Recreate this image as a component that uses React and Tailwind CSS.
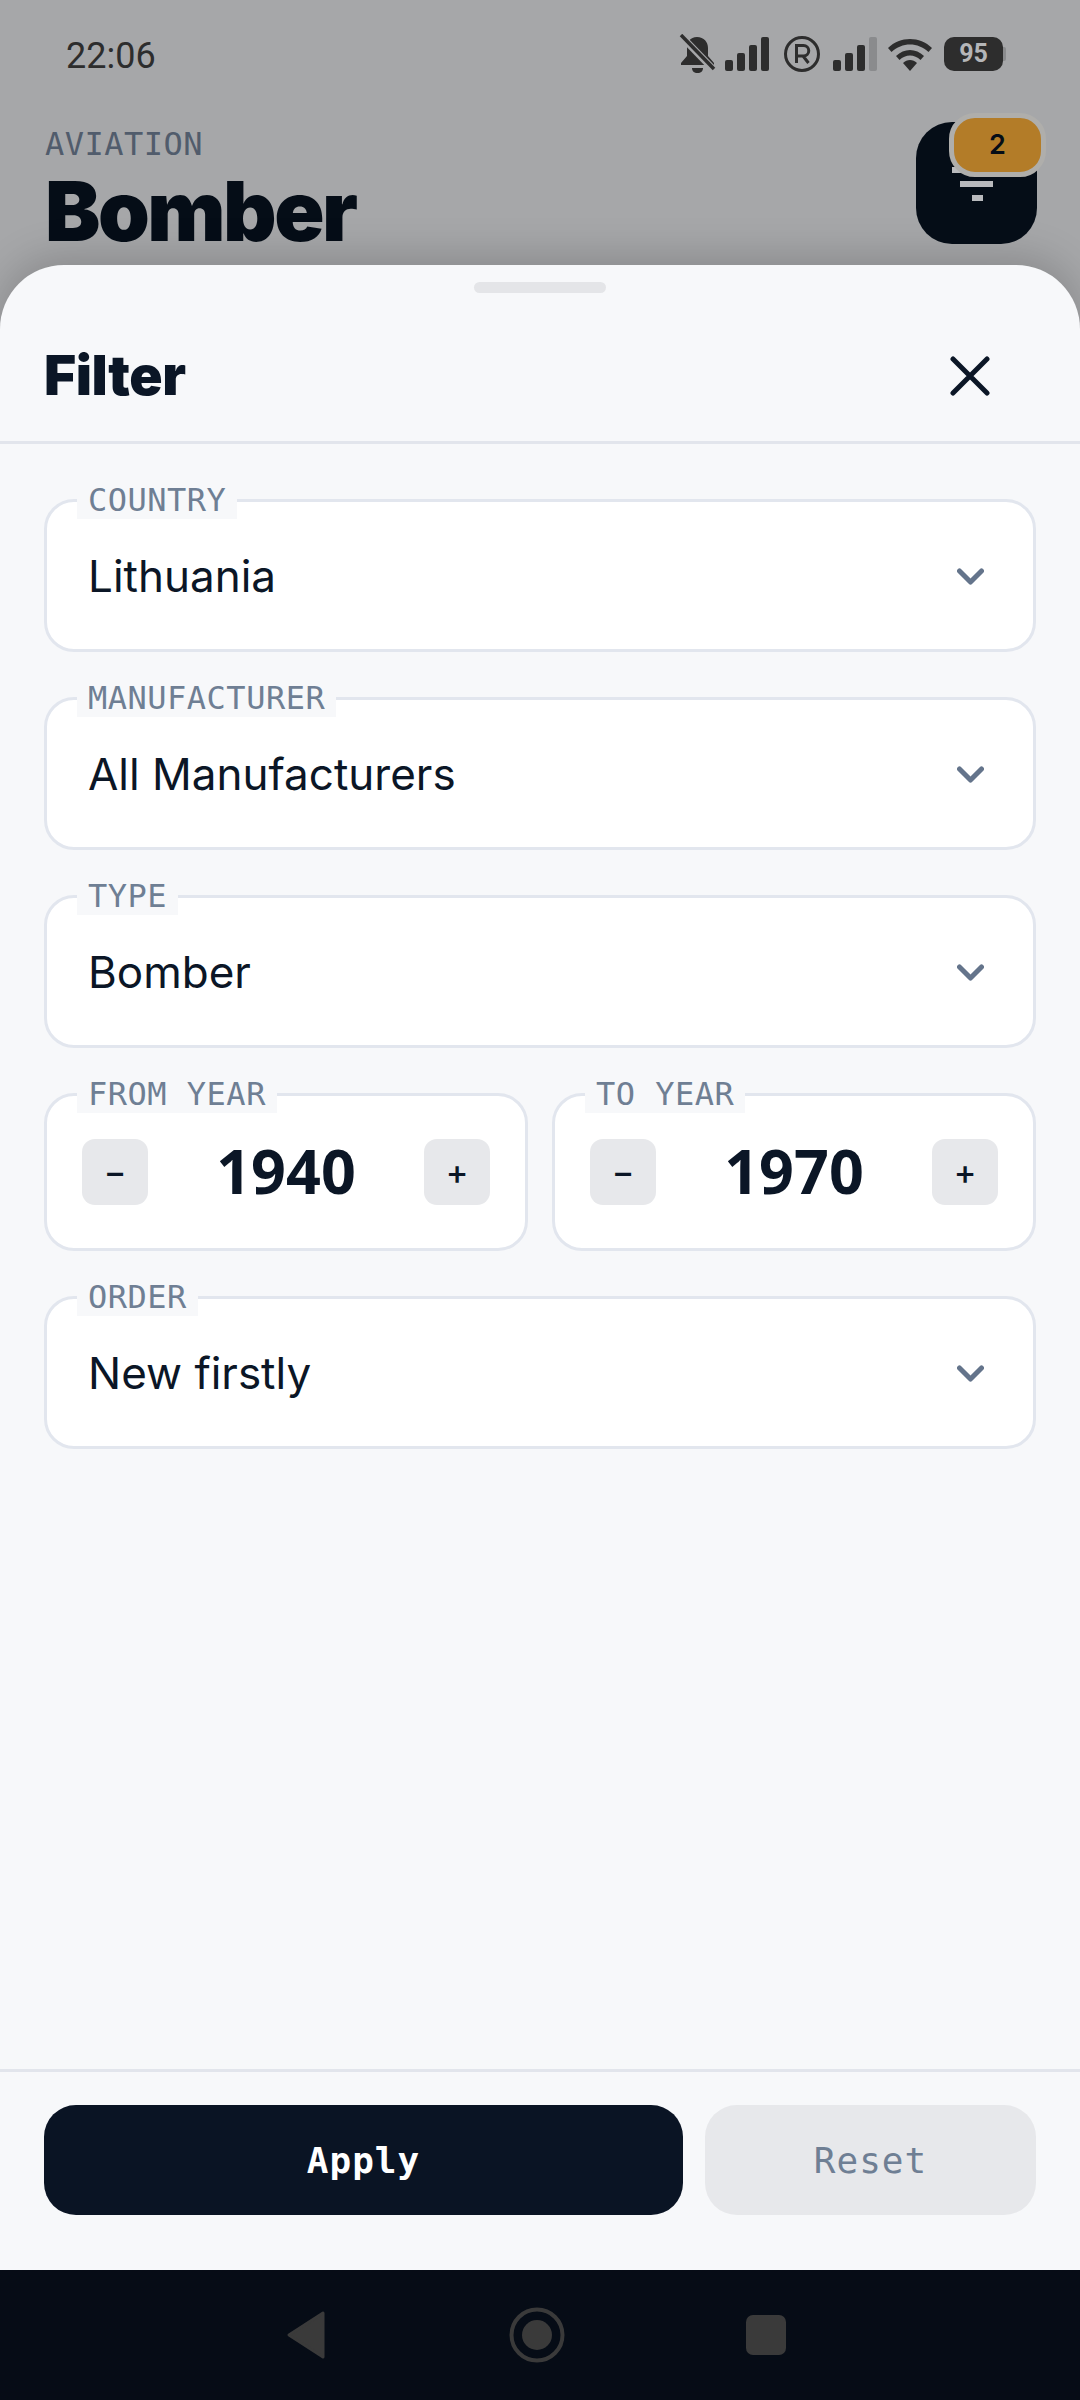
import React from "react";

const mono = "font-['DejaVu_Sans_Mono',monospace]";

function Signal({ last = "#2d2d2d" }) {
  return (
    <svg width="44" height="34" viewBox="0 0 44 34">
      <rect x="0" y="23" width="8" height="11" rx="2" fill="#2d2d2d" />
      <rect x="12" y="16" width="8" height="18" rx="2" fill="#2d2d2d" />
      <rect x="24" y="8" width="8" height="26" rx="2" fill="#2d2d2d" />
      <rect x="36" y="0" width="8" height="34" rx="2" fill={last} />
    </svg>
  );
}

function StatusBar() {
  return (
    <div className="flex h-[112px] items-start justify-between pl-[66px] pr-[74px] pt-[34px]">
      <span className="font-['Roboto',sans-serif] text-[36px] leading-[44px] text-[#2d2d2d]">22:06</span>
      <div className="flex items-center">
        <svg width="38" height="40" viewBox="0 0 38 40" className="mr-[8px]">
          <path d="M18 3c-7 0-10 5-10 11v8l-6 7v2h33v-2l-6-7v-8c0-6-4-11-11-11z" fill="#2d2d2d" />
          <path d="M13 34h11c0 3-2 5-5.500 5S13 37 13 34z" fill="#2d2d2d" />
          <path d="M3 3l32 33" stroke="#a6a7a9" strokeWidth="7" />
          <path d="M2 1l33 34" stroke="#2d2d2d" strokeWidth="3.500" />
        </svg>
        <Signal />
        <svg width="38" height="38" viewBox="0 0 38 38" className="ml-[14px] mr-[12px]">
          <circle cx="19" cy="19" r="16.500" fill="none" stroke="#2d2d2d" strokeWidth="3" />
          <path d="M13.500 28V10.500h7a5 5 0 0 1 0 10.500h-7M20 21l5.500 7" fill="none" stroke="#2d2d2d" strokeWidth="3" />
        </svg>
        <Signal last="#8a8b8d" />
        <svg width="46" height="34" viewBox="0 0 46 34" className="ml-[10px] mr-[11px]">
          <path d="M1 11C13-1 33-1 45 11l-3.500 4C31 5 15 5 4.500 15z" fill="#2d2d2d" />
          <path d="M9 19c8-8 20-8 28 0l-3.500 4c-6-6-15-6-21 0z" fill="#2d2d2d" />
          <path d="M16 26c4-4 10-4 14 0l-7 8z" fill="#2d2d2d" />
        </svg>
        <div className="flex items-center">
          <div className="flex h-[34px] w-[59px] items-center justify-center rounded-[10px] bg-[#2d2d2d] font-['Roboto',sans-serif] text-[25px] font-bold text-[#b5b6b8]">
            95
          </div>
          <div className="h-[14px] w-[3px] rounded-r-[2px] bg-[#8a8b8d]" />
        </div>
      </div>
    </div>
  );
}

function Header() {
  return (
    <div className="flex h-[153px] items-start justify-between pl-[45px] pr-[43px]">
      <div className="flex flex-col pt-[16px]">
        <span className={`${mono} text-[32px] leading-[32px] tracking-[0.5px] text-[#515c6c]`}>AVIATION</span>
        <span className="font-['Inter',sans-serif] mt-[6px] text-[83px] font-black leading-[90px] tracking-[-2.500px] text-[#050d17]">
          Bomber
        </span>
      </div>
      <div className="relative mt-[10px] h-[122px] w-[121px] rounded-[36px] bg-[#050d17]">
        <div className="absolute left-[36px] top-[45px] h-[6px] w-[50px] bg-[#b9babd]" />
        <div className="absolute left-[44px] top-[59px] h-[6px] w-[33px] bg-[#b9babd]" />
        <div className="absolute left-[56px] top-[73px] h-[6px] w-[11px] bg-[#b9babd]" />
        <div className="absolute left-[33px] top-[-9px] flex h-[64px] w-[97px] items-center justify-center rounded-[26px] border-[5px] border-[#afaeab] bg-[#b37c28] font-['Inter',sans-serif] text-[27px] font-semibold text-[#050d17]">
          2
        </div>
      </div>
    </div>
  );
}

function Chevron() {
  return (
    <svg width="27" height="18" viewBox="0 0 27 18" fill="none" className="mt-[3px]">
      <path d="M2.500 3l11 11 11-11" stroke="#64748b" strokeWidth="5" strokeLinecap="round" strokeLinejoin="round" />
    </svg>
  );
}

function Label({ children }) {
  return (
    <span className={`${mono} absolute left-[30px] top-[-21px] bg-[#f7f8fa] px-[11px] text-[32px] leading-[38px] tracking-[0.5px] text-[#6f7f94]`}>
      {children}
    </span>
  );
}

function SelectField({ label, value }) {
  return (
    <div className="relative flex h-[153px] items-center justify-between rounded-[30px] border-[3px] border-[#e2e6ee] bg-white pl-[41px] pr-[49px]">
      <Label>{label}</Label>
      <span className="font-['Inter',sans-serif] text-[44px] leading-[52px] text-[#0b1626]">{value}</span>
      <Chevron />
    </div>
  );
}

function StepButton({ children }) {
  return (
    <div className="flex h-[66px] w-[66px] items-center justify-center rounded-[13px] bg-[#e7e8eb] font-['Inter',sans-serif] text-[34px] font-medium leading-none text-[#0b1626]">
      {children}
    </div>
  );
}

function YearField({ label, value }) {
  return (
    <div className="relative flex h-[158px] flex-1 items-center justify-between rounded-[30px] border-[3px] border-[#e2e6ee] bg-white px-[35px]">
      <Label>{label}</Label>
      <StepButton>−</StepButton>
      <span className="mb-[4px] font-['Noto_Sans',sans-serif] text-[61px] font-bold leading-none text-[#0b1626]">{value}</span>
      <StepButton>+</StepButton>
    </div>
  );
}

export default function App() {
  return (
    <div className="flex h-[2400px] w-[1080px] flex-col overflow-hidden bg-[#a6a7a9]">
      <StatusBar />
      <Header />
      <div className="flex flex-1 flex-col rounded-t-[64px] bg-[#f7f8fa] shadow-[0_-8px_40px_rgba(0,0,0,0.18)]">
        <div className="flex h-[179px] flex-col border-b-[3px] border-[#e2e5ec]">
          <div className="mx-auto mt-[17px] h-[11px] w-[132px] rounded-full bg-[#e4e5e8]" />
          <div className="flex flex-1 items-center justify-between pl-[44px] pr-[90px] pt-[17px]">
            <span className="font-['Inter',sans-serif] text-[55px] font-black leading-none tracking-[-0.400px] text-[#0b1626]">Filter</span>
            <svg width="40" height="40" viewBox="0 0 40 40" fill="none">
              <path d="M3 3l34 34M37 3L3 37" stroke="#0b1626" strokeWidth="5" strokeLinecap="round" />
            </svg>
          </div>
        </div>
        <div className="flex flex-1 flex-col gap-[45px] px-[44px] pt-[55px]">
          <SelectField label="COUNTRY" value="Lithuania" />
          <SelectField label="MANUFACTURER" value="All Manufacturers" />
          <SelectField label="TYPE" value="Bomber" />
          <div className="flex gap-[24px]">
            <YearField label="FROM YEAR" value="1940" />
            <YearField label="TO YEAR" value="1970" />
          </div>
          <SelectField label="ORDER" value="New firstly" />
        </div>
        <div className="flex h-[201px] gap-[22px] border-t-[3px] border-[#e2e5ec] px-[44px] pt-[33px]">
          <div className={`${mono} flex h-[110px] w-[639px] items-center justify-center rounded-[32px] bg-[#0a1424] pt-[2px] text-[36px] font-bold tracking-[1px] text-white`}>
            Apply
          </div>
          <div className={`${mono} flex h-[110px] flex-1 items-center justify-center rounded-[32px] bg-[#e7e8eb] pt-[2px] text-[36px] tracking-[1px] text-[#6f7f94]`}>
            Reset
          </div>
        </div>
      </div>
      <div className="flex h-[130px] items-center justify-center bg-[#060c16] pr-[8px]">
        <svg width="38" height="48" viewBox="0 0 38 48" className="mr-[184px]">
          <path d="M36 2v44L2 24z" fill="#3a3a3a" stroke="#3a3a3a" strokeWidth="3" strokeLinejoin="round" />
        </svg>
        <svg width="56" height="56" viewBox="0 0 56 56" className="mr-[181px]">
          <circle cx="28" cy="28" r="25.500" fill="none" stroke="#3a3a3a" strokeWidth="4" />
          <circle cx="28" cy="28" r="15" fill="#3a3a3a" />
        </svg>
        <div className="h-[40px] w-[40px] rounded-[7px] bg-[#3a3a3a]" />
      </div>
    </div>
  );
}
